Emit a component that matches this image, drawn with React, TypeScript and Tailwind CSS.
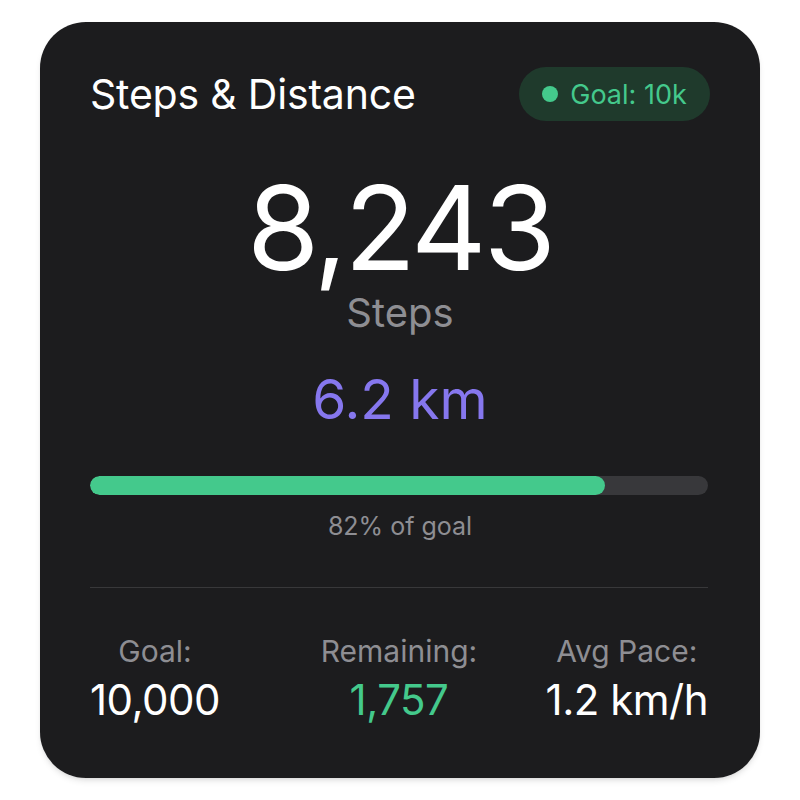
import React from 'react';

const stats = [
  { label: 'Goal:', value: '10,000', tone: 'text-white', place: 'justify-self-start' },
  { label: 'Remaining:', value: '1,757', tone: 'text-[#44c98c]', place: 'justify-self-center' },
  { label: 'Avg Pace:', value: '1.2 km/h', tone: 'text-white', place: 'justify-self-end' },
];

export default function App() {
  return (
    <div className="w-[800px] h-[800px] bg-white pt-[22px] px-[40px]" style={{ fontFamily: 'Inter, "Liberation Sans", sans-serif' }}>
      <div className="w-[720px] h-[756px] rounded-[46px] bg-[#1c1c1e] shadow-md px-[50px] pt-[45px] flex flex-col">
        {/* header */}
        <div className="flex items-center justify-between h-[54px]">
          <h1 className="text-[41px] leading-none text-white font-normal tracking-[-0.2px]">Steps &amp; Distance</h1>
          <div className="h-[54px] w-[191px] rounded-full bg-[#1f3a2c] flex items-center justify-center gap-[12px]">
            <span className="w-[16px] h-[16px] rounded-full bg-[#44c98c]" />
            <span className="text-[27px] leading-none text-[#44c98c]">Goal: 10k</span>
          </div>
        </div>

        {/* main count */}
        <div className="mt-[48px] flex flex-col items-center">
          <div className="text-[117px] leading-none text-white font-normal tracking-[-3px]">8,243</div>
          <div className="mt-[7px] text-[40px] leading-none text-[#8e8e93]">Steps</div>
          <div className="mt-[39px] text-[55px] leading-none text-[#8677ee]">6.2 km</div>
        </div>

        {/* progress */}
        <div className="mt-[49px] h-[19px] w-[618px] rounded-full bg-[#38383b] overflow-hidden">
          <div className="h-full rounded-full bg-[#44c98c]" style={{ width: '83.3%' }} />
        </div>
        <div className="mt-[19px] text-center text-[25px] leading-none text-[#8e8e93]">82% of goal</div>

        <div className="mt-[48px] h-px w-[618px] bg-[#38383a]" />

        {/* stats */}
        <div className="mt-[48px] w-[618px] grid grid-cols-[1fr_auto_1fr]">
          {stats.map((s) => (
            <div key={s.label} className={`flex flex-col items-center ${s.place}`}>
              <div className="text-[30px] leading-none text-[#8e8e93]">{s.label}</div>
              <div className={`mt-[13px] text-[42px] leading-none tracking-[-0.5px] ${s.tone}`}>{s.value}</div>
            </div>
          ))}
        </div>
      </div>
    </div>
  );
}
